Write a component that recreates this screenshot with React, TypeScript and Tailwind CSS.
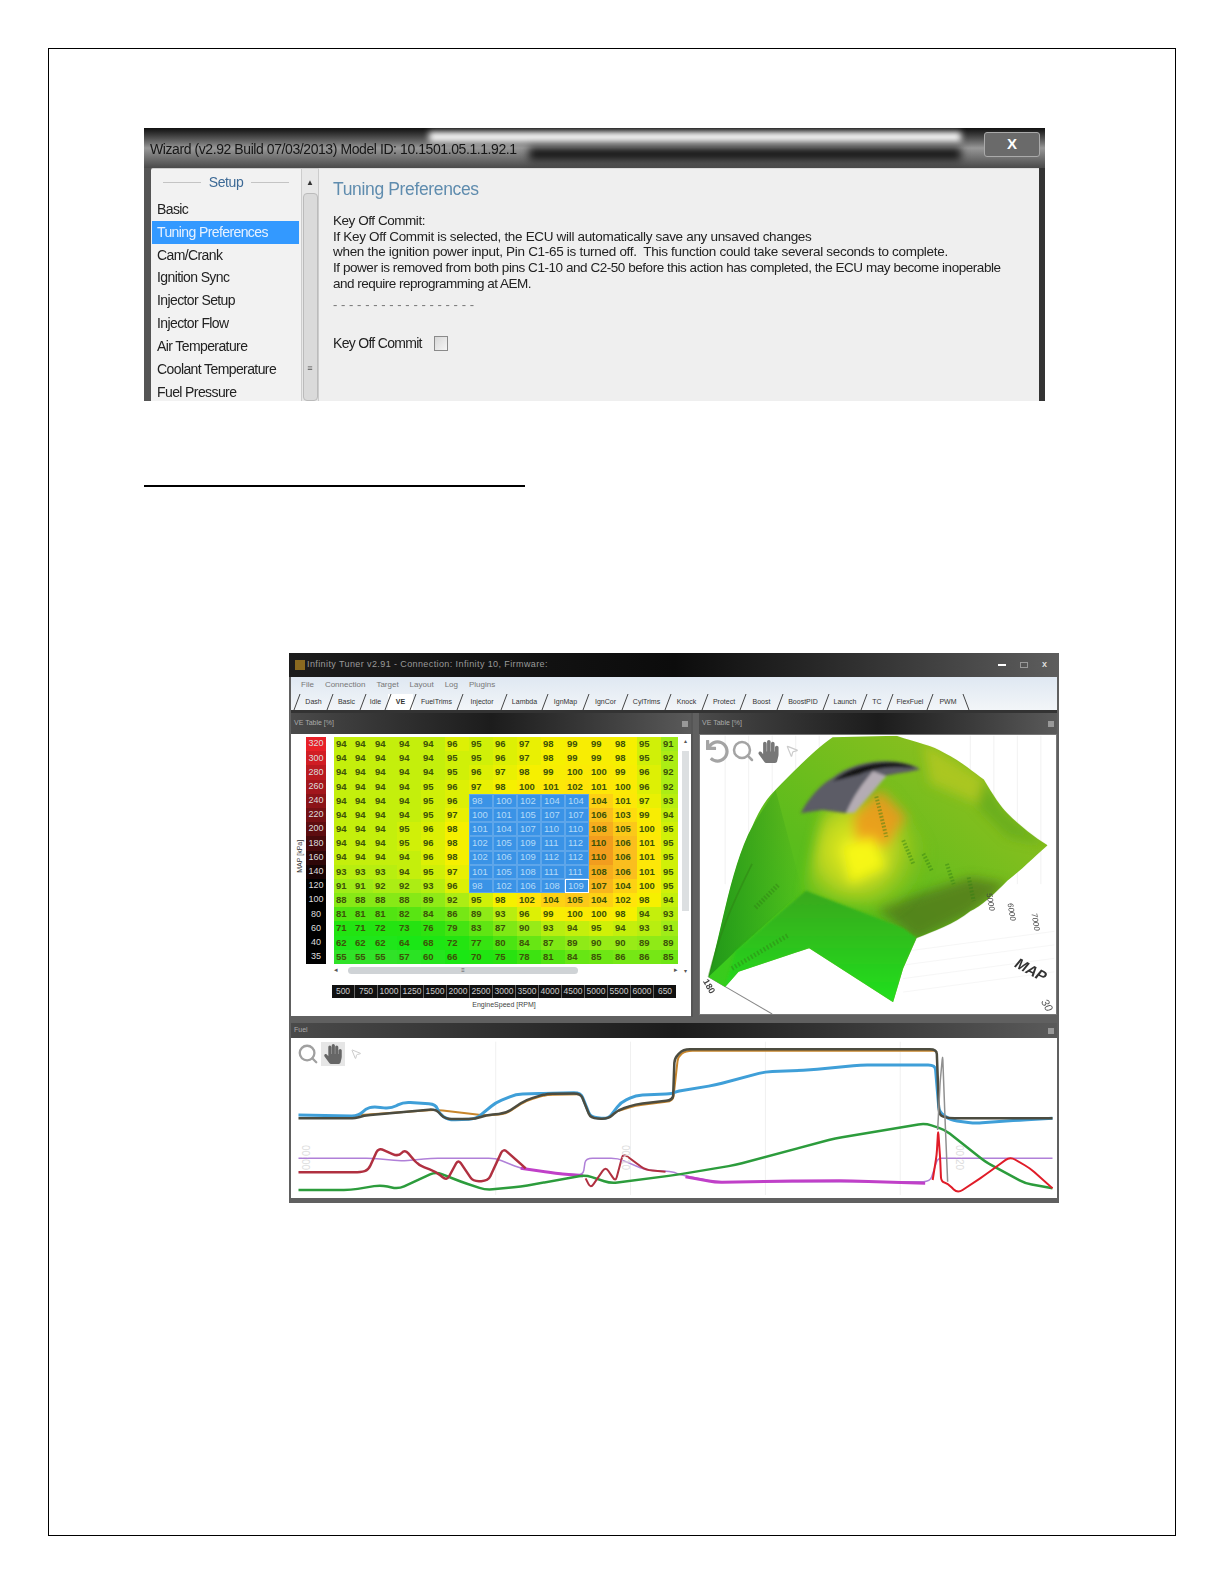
import { FaHandPaper, FaUndo } from "react-icons/fa";
import { MousePointer2, Search } from "lucide-react";

const sidebarItems = ["Basic", "Tuning Preferences", "Cam/Crank", "Ignition Sync", "Injector Setup", "Injector Flow", "Air Temperature", "Coolant Temperature", "Fuel Pressure"];

const tabs = [
  ["Dash", 33], ["Basic", 33], ["Idle", 25], ["VE", 25], ["FuelTrims", 47], ["Injector", 44], ["Lambda", 41], ["IgnMap", 41], ["IgnCor", 39],
  ["CylTrims", 43], ["Knock", 37], ["Protect", 38], ["Boost", 37], ["BoostPID", 46], ["Launch", 38], ["TC", 26], ["FlexFuel", 40], ["PWM", 36],
] as const;

const mapAxis = [320, 300, 280, 260, 240, 220, 200, 180, 160, 140, 120, 100, 80, 60, 40, 35];
const rpmAxis = [500, 750, 1000, 1250, 1500, 2000, 2500, 3000, 3500, 4000, 4500, 5000, 5500, 6000, 650];

const veTable = [
  [94, 94, 94, 94, 94, 96, 95, 96, 97, 98, 99, 99, 98, 95, 91],
  [94, 94, 94, 94, 94, 95, 95, 96, 97, 98, 99, 99, 98, 95, 92],
  [94, 94, 94, 94, 94, 95, 96, 97, 98, 99, 100, 100, 99, 96, 92],
  [94, 94, 94, 94, 95, 96, 97, 98, 100, 101, 102, 101, 100, 96, 92],
  [94, 94, 94, 94, 95, 96, 98, 100, 102, 104, 104, 104, 101, 97, 93],
  [94, 94, 94, 94, 95, 97, 100, 101, 105, 107, 107, 106, 103, 99, 94],
  [94, 94, 94, 95, 96, 98, 101, 104, 107, 110, 110, 108, 105, 100, 95],
  [94, 94, 94, 95, 96, 98, 102, 105, 109, 111, 112, 110, 106, 101, 95],
  [94, 94, 94, 94, 96, 98, 102, 106, 109, 112, 112, 110, 106, 101, 95],
  [93, 93, 93, 94, 95, 97, 101, 105, 108, 111, 111, 108, 106, 101, 95],
  [91, 91, 92, 92, 93, 96, 98, 102, 106, 108, 109, 107, 104, 100, 95],
  [88, 88, 88, 88, 89, 92, 95, 98, 102, 104, 105, 104, 102, 98, 94],
  [81, 81, 81, 82, 84, 86, 89, 93, 96, 99, 100, 100, 98, 94, 93],
  [71, 71, 72, 73, 76, 79, 83, 87, 90, 93, 94, 95, 94, 93, 91],
  [62, 62, 62, 64, 68, 72, 77, 80, 84, 87, 89, 90, 90, 89, 89],
  [55, 55, 55, 57, 60, 66, 70, 75, 78, 81, 84, 85, 86, 86, 85],
];

// value -> colour stops for the fuel map
const stops: [number, number[]][] = [
  [55, [48, 226, 40]],
  [65, [24, 232, 20]],
  [75, [40, 226, 16]],
  [85, [110, 230, 20]],
  [91, [160, 236, 24]],
  [95, [208, 240, 8]],
  [98, [246, 240, 0]],
  [102, [255, 228, 10]],
  [106, [250, 190, 30]],
  [112, [238, 140, 30]],
];

function heat(v: number) {
  for (let i = 1; i < stops.length; i++) {
    if (v <= stops[i][0]) {
      const [a, ca] = stops[i - 1];
      const [b, cb] = stops[i];
      const t = (v - a) / (b - a);
      return `rgb(${ca.map((c, k) => Math.round(c + (cb[k] - c) * t)).join(",")})`;
    }
  }
  return "rgb(238,140,30)";
}

function mapColor(row: number) {
  const t = Math.min(row / 10, 1);
  return `rgb(${Math.round(232 * (1 - t))},${Math.round(32 * (1 - t))},${Math.round(40 * (1 - t))})`;
}

// rounds only the corners of a polyline, so the steep steps in the traces stay steep
function roundedPath(pts: string, radius = 14) {
  const p = pts.split(" ").map((s) => s.split(",").map(Number));
  let d = `M${p[0][0]} ${p[0][1]}`;
  const toward = (a: number[], b: number[]) => {
    const len = Math.hypot(b[0] - a[0], b[1] - a[1]) || 1;
    const r = Math.min(radius, len / 2);
    return [a[0] + ((b[0] - a[0]) / len) * r, a[1] + ((b[1] - a[1]) / len) * r];
  };
  for (let i = 1; i < p.length - 1; i++) {
    const from = toward(p[i], p[i - 1]);
    const to = toward(p[i], p[i + 1]);
    d += ` L${from[0]} ${from[1]} Q${p[i][0]} ${p[i][1]} ${to[0]} ${to[1]}`;
  }
  const last = p[p.length - 1];
  return `${d} L${last[0]} ${last[1]}`;
}

function Wizard() {
  return (
    <div className="relative ml-[95px] mt-[79px] flex h-[273px] w-[901px] flex-col overflow-hidden bg-gradient-to-r from-[#555] to-[#333] font-['Liberation_Sans',sans-serif]">
      <div className="relative flex h-[40px] shrink-0 items-center bg-gradient-to-b from-[#111] via-[#989898] to-[#4a4a4a] pl-[6px] pt-[3px]">
        <div className="absolute left-[285px] right-[84px] top-[4px] h-[10px] bg-[#fafafa] blur-[3px]" />
        <div className="absolute left-[385px] right-[84px] top-[20px] h-[12px] bg-[#111] blur-[4px]" />
        <span className="relative text-[14px] tracking-[-0.42px] text-[#161616] blur-[0.3px]">Wizard (v2.92 Build 07/03/2013) Model ID: 10.1501.05.1.1.92.1</span>
        <div className="absolute right-[5px] top-[4px] flex h-[25px] w-[56px] items-center justify-center rounded-[3px] border border-[#aaa] bg-[#6a6a6a] text-[15px] font-bold text-white">X</div>
      </div>
      <div className="flex min-h-0 flex-1 pl-[7px] pr-[6px] blur-[0.3px]">
        <div className="flex w-[168px] shrink-0 rounded-tl-[2px] border-t border-r border-[#ccc] bg-[#f2f2f2]">
          <div className="flex w-[150px] flex-col">
            <div className="flex h-[30px] items-center justify-center gap-[8px] pt-[3px] text-[14px] tracking-[-0.4px] text-[#3d6a96]">
              <span className="h-px w-[38px] bg-[#c4c4c4]" />
              Setup
              <span className="h-px w-[38px] bg-[#c4c4c4]" />
            </div>
            <div className="pl-[1px] pr-[2px] pt-[5px]">
              {sidebarItems.map((item) => (
                <div key={item} className={`flex h-[22.85px] shrink-0 items-center pl-[5px] text-[14px] tracking-[-0.6px] ${item === "Tuning Preferences" ? "bg-[#3399ff] text-[#e8f2ff]" : "text-[#222]"}`}>
                  {item}
                </div>
              ))}
            </div>
          </div>
          <div className="flex flex-1 flex-col items-center border-l border-[#ccc] bg-[#e8e8e8] pt-[10px]">
            <span className="text-[8px] leading-none text-[#333]">▲</span>
            <div className="mt-[6px] flex h-[220px] w-[15px] items-end justify-center rounded-sm border border-[#bbb] bg-[#dadada] pb-[27px] text-[9px] leading-none text-[#555]">≡</div>
          </div>
        </div>
        <div className="flex flex-1 flex-col border-t border-[#ddd] bg-[#efefef] pl-[14px] text-[#222]">
          <h2 className="mt-[8px] text-[17.5px] leading-[24px] tracking-[-0.35px] text-[#5f8cae]">Tuning Preferences</h2>
          <div className="mt-[12px] text-[13.5px] leading-[15.7px]">
            <p className="tracking-[-0.45px]">Key Off Commit:</p>
            <p className="tracking-[-0.32px]">If Key Off Commit is selected, the ECU will automatically save any unsaved changes</p>
            <p className="tracking-[-0.3px]">when the ignition power input, Pin C1-65 is turned off.&nbsp; This function could take several seconds to complete.</p>
            <p className="tracking-[-0.45px]">If power is removed from both pins C1-10 and C2-50 before this action has completed, the ECU may become inoperable</p>
            <p className="tracking-[-0.5px]">and require reprogramming at AEM.</p>
          </div>
          <p className="mt-[5px] text-[13px] leading-[16px] tracking-[0.05px] text-[#777]">- - - - - - - - - - - - - - - - - -</p>
          <div className="mt-[20px] flex items-center gap-[12px] text-[14px] tracking-[-0.7px]">
            Key Off Commit
            <span className="h-[15px] w-[14px] border border-[#8a8a8a] bg-gradient-to-br from-[#d8d8d8] to-[#f6f6f6]" />
          </div>
        </div>
      </div>
    </div>
  );
}

function TabStrip() {
  return (
    <div className="flex h-[17px] items-end pl-[6px]">
      {tabs.map(([name, width]) => (
        <div key={name} style={{ width }} className={`relative flex h-[16px] shrink-0 items-center justify-center text-[7px] text-[#333] ${name === "VE" ? "bg-white font-bold" : ""}`}>
          <svg className="absolute -left-[4px] top-0 h-[16px] w-[8px]" viewBox="0 0 8 16">
            <path d="M1 16 L7 0" stroke="#444" strokeWidth="1" fill="none" />
          </svg>
          {name}
        </div>
      ))}
      <svg className="h-[16px] w-[8px] -ml-[4px]" viewBox="0 0 8 16">
        <path d="M1 0 L7 16" stroke="#444" strokeWidth="1" fill="none" />
      </svg>
    </div>
  );
}

function PanelHeader({ title, height }: { title: string; height: string }) {
  return (
    <div className={`flex ${height} shrink-0 items-center justify-between bg-gradient-to-r from-[#4a4a4a] via-[#1c1c1c] to-[#5a5a5a] px-[3px] text-[7px] text-[#aaa]`}>
      {title}
      <span className="h-[6px] w-[6px] bg-[#999]" />
    </div>
  );
}

function VeTable() {
  return (
    <div className="relative flex h-[282px] flex-col bg-white pl-[5px] pt-[3px]">
      <div className="flex">
        <div className="flex w-[8px] items-center justify-center">
          <span className="-rotate-90 whitespace-nowrap text-[7px] text-[#333]">MAP [kPa]</span>
        </div>
        <div className="ml-[2px] flex w-[20px] flex-col">
          {mapAxis.map((kpa, i) => (
            <div key={kpa} style={{ backgroundColor: mapColor(i) }} className="flex h-[14.2px] items-center justify-center text-[9px] text-[#ddd]">
              {kpa}
            </div>
          ))}
        </div>
        <div className="ml-[8px] w-[344px]">
          <div className="grid grid-cols-[19px_20px_repeat(12,24px)_17px]">
            {veTable.flatMap((row, r) =>
              row.map((v, c) => {
                const blue = r >= 4 && r <= 10 && c >= 6 && c <= 10;
                const selected = r === 10 && c === 10;
                return (
                  <div
                    key={`${r}-${c}`}
                    style={blue ? undefined : { backgroundColor: heat(v) }}
                    className={`flex h-[14.2px] items-center overflow-hidden pl-[2px] text-[9.5px] font-bold ${blue ? "border-[0.5px] border-[#5ea6ea] bg-[#3a93e6] font-normal text-[#b4daf8]" : "text-[#3c5208]"} ${selected ? "border-[1px] border-white" : ""}`}
                  >
                    {v}
                  </div>
                );
              }),
            )}
          </div>
          <div className="mt-[1px] flex h-[11px] items-center text-[7px] text-[#555]">
            <span className="w-[14px]">◂</span>
            <div className="h-[7px] w-[230px] rounded-sm bg-[#cfd3d6] text-center text-[6px] leading-[7px]">≡</div>
            <span className="ml-auto">▸</span>
          </div>
        </div>
        <div className="ml-[2px] flex w-[10px] flex-col items-center text-[6px] text-[#555]">
          ▴
          <div className="mt-[5px] h-[160px] w-[7px] bg-[#dcdfe1]" />
          <span className="mt-auto">▾</span>
        </div>
      </div>
      <div className="ml-[36px] mt-[9px] flex h-[13px] w-[344px] overflow-hidden bg-[#111]">
        {rpmAxis.map((rpm) => (
          <div key={rpm} className="flex w-[23px] shrink-0 items-center justify-center border-r border-[#666] text-[8.5px] text-[#ccc]">
            {rpm}
          </div>
        ))}
      </div>
      <div className="ml-[36px] mt-[2px] w-[344px] text-center text-[7px] text-[#444]">EngineSpeed [RPM]</div>
    </div>
  );
}

function Surface() {
  return (
    <div className="relative h-[279px] overflow-hidden bg-white">
      <svg className="h-full w-full" viewBox="35 258 1060 827" preserveAspectRatio="none">
        <defs>
          <linearGradient id="base" x1="0" y1="1" x2="1" y2="0">
            <stop offset="0" stopColor="#2ed01c" />
            <stop offset="0.45" stopColor="#5cbc1c" />
            <stop offset="1" stopColor="#a0c020" />
          </linearGradient>
          <radialGradient id="hot" cx="500" cy="600" r="220" gradientUnits="userSpaceOnUse">
            <stop offset="0" stopColor="#f4f41c" />
            <stop offset="0.5" stopColor="#c8d820" stopOpacity="0.85" />
            <stop offset="1" stopColor="#8cc01c" stopOpacity="0" />
          </radialGradient>
          <linearGradient id="front" x1="0" y1="0" x2="0" y2="1">
            <stop offset="0" stopColor="#3aa81c" />
            <stop offset="1" stopColor="#20e020" />
          </linearGradient>
          <linearGradient id="shade" x1="0" y1="0" x2="1" y2="0">
            <stop offset="0" stopColor="#1d8a18" stopOpacity="0.8" />
            <stop offset="1" stopColor="#1d8a18" stopOpacity="0" />
          </linearGradient>
          <filter id="soft"><feGaussianBlur stdDeviation="18" /></filter>
          <filter id="mid"><feGaussianBlur stdDeviation="16" /></filter>
          <filter id="ridge"><feGaussianBlur stdDeviation="5" /></filter>
          <filter id="softer"><feGaussianBlur stdDeviation="3" /></filter>
        </defs>
        {[110, 180, 250, 320, 390, 840, 910, 980, 1050].map((x) => (
          <line key={x} x1={x} y1="260" x2={x} y2="700" stroke="#e6e6e6" strokeWidth="1.5" />
        ))}
        {[900, 940, 980, 1020].map((y) => (
          <line key={y} x1="640" y1={y} x2="1090" y2={y - 60} stroke="#eeeeee" strokeWidth="1.5" />
        ))}
        <line x1="60" y1="975" x2="250" y2="1085" stroke="#888" strokeWidth="3" />
        <clipPath id="hull">
          <path d="M60 975 C100 830 130 640 190 530 C215 470 240 440 260 420 C330 350 380 300 430 265 L620 260 C680 280 730 290 760 310 C820 340 850 370 880 390 C910 440 930 470 950 490 C990 530 1030 560 1070 585 C1030 620 990 660 950 690 C910 730 880 760 840 780 C790 820 730 840 680 860 L640 950 L610 1050 L360 890 L150 960 L110 1005 Z" />
        </clipPath>
        <g clipPath="url(#hull)">
          <rect x="35" y="258" width="1060" height="827" fill="url(#base)" />
          <path d="M60 975 C100 830 130 640 190 530 L260 420 L340 720 L140 900 Z" fill="url(#shade)" />
          <g filter="url(#mid)">
            <path d="M560 770 L840 680 L950 700 L840 790 L680 870 Z" fill="#4e6e1c" opacity="0.7" />
            <path d="M880 390 L950 490 L1070 585 L950 560 L860 470 Z" fill="#5fa81c" opacity="0.7" />
            <path d="M700 280 L880 390 L860 460 L720 400 Z" fill="#b4c822" opacity="0.8" />
          </g>
          <g filter="url(#soft)">
            <path d="M340 740 L400 480 L600 420 L740 620 L640 790 Z" fill="url(#hot)" />
            <path d="M490 500 L570 420 L650 500 L590 590 L500 570 Z" fill="#f0961c" opacity="0.85" />
            <path d="M460 590 L550 560 L590 650 L480 700 Z" fill="#f8f818" opacity="0.95" />
          </g>
          <path d="M350 720 L640 830 L680 860 L640 950 L610 1050 L360 890 L150 960 L110 1005 L140 900 Z" fill="url(#front)" filter="url(#softer)" />
          <g filter="url(#ridge)">
            <path d="M335 490 C360 440 400 400 430 385 C480 345 560 330 620 338 C650 342 680 350 690 360 C640 372 600 372 570 385 L500 440 L470 490 L400 480 Z" fill="#5c5c66" />
            <path d="M470 490 C490 440 520 400 550 365 L590 380 C570 400 540 440 495 488 Z" fill="#b4acb4" />
            <path d="M430 395 C480 350 560 335 620 340 C650 344 670 350 675 355 C620 352 560 352 510 375 Z" fill="#161616" />
          </g>
        </g>
        <g stroke="#2f7e14" opacity="0.45" fill="none">
          <path d="M60 975 C90 860 120 780 190 640" strokeWidth="5" />
          <path d="M130 950 L300 850" strokeDasharray="5 6" strokeWidth="14" />
          <path d="M200 770 L270 700" strokeDasharray="5 5" strokeWidth="14" />
          <path d="M640 570 L670 640 M700 610 L725 660 M770 640 L790 700 M835 680 L850 750" strokeDasharray="5 5" strokeWidth="12" />
          <path d="M560 440 L590 560" strokeDasharray="5 5" strokeWidth="12" />
        </g>
      </svg>
      <span className="absolute left-[281px] top-[161px] rotate-[80deg] text-[8px] italic text-[#444]">5000</span>
      <span className="absolute left-[302px] top-[171px] rotate-[80deg] text-[8px] italic text-[#444]">6000</span>
      <span className="absolute left-[326px] top-[181px] rotate-[80deg] text-[8px] italic text-[#444]">7000</span>
      <span className="absolute left-[314px] top-[224px] rotate-[28deg] whitespace-nowrap text-[15px] font-bold italic text-[#333]">MAP</span>
      <span className="absolute right-[3px] top-[262px] rotate-[60deg] text-[11px] italic text-[#555]">30</span>
      <span className="absolute left-[1px] top-[245px] rotate-[60deg] text-[9px] font-bold text-[#444]">180</span>
      <div className="absolute left-[6px] top-[4px] flex items-center gap-[2px] text-[#a4a4a4]">
        <FaUndo size={23} />
        <Search size={24} strokeWidth={2.5} />
        <FaHandPaper size={23} className="text-[#777]" />
        <MousePointer2 size={14} className="ml-[3px] text-[#ccc]" />
      </div>
    </div>
  );
}

function TracePlot() {
  const lines: [string, string, number][] = [
    ["#b080d8", "25,430 175,430 230,438 290,430 420,430 470,460 540,475 595,480 600,430 665,430 720,465 775,470 790,480 860,500 1290,500 1305,430 1320,430 1535,430", 1.5],
    ["#c040c8", "470,460 540,475 595,482", 3],
    ["#c040c8", "800,485 860,502 1000,498 1120,497 1280,505", 3],
    ["#c8862c", "150,300 300,284 400,302 440,297 480,258 520,240 590,238", 2],
    ["#c8862c", "665,288 700,272 775,258 785,125 800,107 1300,107", 2],
    ["#3f9fd8", "25,300 145,303 160,281 175,275 210,281 235,261 300,268 306,295 325,315 380,312 420,263 460,238 520,235 590,233 610,306 645,312 670,263 700,241 775,236 780,230 860,210 960,170 1050,165 1150,150 1300,150 1308,290 1330,315 1380,325 1470,315 1535,310", 3],
    ["#4c4c40", "25,310 140,310 155,302 300,282 318,312 380,312 400,300 440,295 480,255 520,237 590,235 610,310 645,312 665,285 700,268 775,255 778,130 795,103 1303,103 1308,300 1325,310 1535,310", 2.5],
    ["#2c9c3c", "25,525 130,525 190,510 225,522 300,470 350,500 400,525 470,515 600,480 650,505 780,480 900,450 1100,370 1280,325 1320,345 1400,440 1480,505 1535,520", 2.5],
    ["#b03040", "25,472 150,472 165,465 185,398 225,425 238,403 265,450 300,470 322,497 345,433 375,500 405,497 435,400 480,460", 2.5],
    ["#b03040", "600,490 610,520 640,455 660,500 675,415 720,465 760,470", 2],
    ["#e01c28", "1295,495 1303,420 1306,345 1310,430 1312,500 1325,505 1345,535 1400,480 1450,425 1490,460 1535,520", 2],
    ["#909090", "1305,345 1310,200 1315,120 1320,320 1325,500", 1.5],
  ];
  return (
    <div className="relative h-[160px] bg-white">
      <svg className="h-full w-full" viewBox="10 69 1534 480" preserveAspectRatio="none">
        {[420, 690, 960, 1230].map((x) => (
          <line key={x} x1={x} y1="80" x2={x} y2="540" stroke="#f0f0f0" strokeWidth="1" vectorEffect="non-scaling-stroke" />
        ))}
        {lines.map(([color, pts, w], i) => (
          <path key={i} d={roundedPath(pts)} fill="none" stroke={color} strokeWidth={w} strokeLinejoin="round" vectorEffect="non-scaling-stroke" />
        ))}
      </svg>
      <span className="absolute left-[2px] top-[112px] rotate-90 text-[10px] text-[#ddd]">00:00</span>
      <span className="absolute left-[322px] top-[112px] rotate-90 text-[10px] text-[#ddd]">00:10</span>
      <span className="absolute left-[656px] top-[112px] rotate-90 text-[10px] text-[#ddd]">00:20</span>
      <div className="absolute left-[6px] top-[4px] flex items-center gap-[2px] text-[#a0a0a0]">
        <Search size={22} strokeWidth={2.5} />
        <div className="flex h-[24px] w-[24px] items-center justify-center bg-[#e6e6e6]">
          <FaHandPaper size={20} className="text-[#666]" />
        </div>
        <MousePointer2 size={12} className="ml-[3px] text-[#ccc]" />
      </div>
    </div>
  );
}

function TunerWindow() {
  return (
    <div className="ml-[240px] mt-[166px] flex h-[550px] w-[770px] flex-col overflow-hidden bg-[#606060] px-[2px] font-['Liberation_Sans',sans-serif] blur-[0.7px]">
      <div className="-mx-[2px] flex h-[24px] shrink-0 items-center bg-gradient-to-r from-[#1c1c1c] via-[#0c0c0c] to-[#5e5e5e] pl-[6px] pr-[12px]">
        <span className="h-[10px] w-[10px] bg-[#8a6a20]" />
        <span className="ml-[2px] text-[9px] tracking-[0.4px] text-[#9a9a9a]">Infinity Tuner v2.91 - Connection: Infinity 10, Firmware:</span>
        <div className="ml-auto flex items-center gap-[14px] text-[9px] font-bold text-[#ddd]">
          <span className="h-[2px] w-[8px] bg-white" />
          <span className="h-[6px] w-[8px] border border-[#999]" />
          <span>x</span>
        </div>
      </div>
      <div className="h-[33px] shrink-0 bg-gradient-to-b from-[#dfe8f2] to-[#f2f5f8]">
        <div className="flex h-[16px] items-center gap-[11px] pl-[10px] text-[8px] text-[#777]">
          <span>File</span><span>Connection</span><span>Target</span><span>Layout</span><span>Log</span><span>Plugins</span>
        </div>
        <TabStrip />
      </div>
      <div className="h-[3px] shrink-0 bg-[#333]" />
      <div className="flex h-[304px] shrink-0 gap-[6px]">
        <div className="flex w-[402px] shrink-0 flex-col border-r-2 border-[#555]">
          <PanelHeader title="VE Table [%]" height="h-[21px]" />
          <VeTable />
        </div>
        <div className="flex flex-1 flex-col">
          <PanelHeader title="VE Table [%]" height="h-[21px]" />
          <div className="border border-[#777]"><Surface /></div>
        </div>
      </div>
      <div className="mt-[6px] flex flex-1 flex-col pb-[5px]">
        <PanelHeader title="Fuel" height="h-[15px]" />
        <TracePlot />
      </div>
    </div>
  );
}

export default function App() {
  return (
    <div className="h-[1584px] w-[1224px] bg-white p-[48px]">
      <div className="flex h-[1488px] w-[1128px] flex-col border border-black">
        <Wizard />
        <div className="ml-[95px] mt-[84px] h-[2px] w-[381px] shrink-0 bg-black" />
        <TunerWindow />
      </div>
    </div>
  );
}
